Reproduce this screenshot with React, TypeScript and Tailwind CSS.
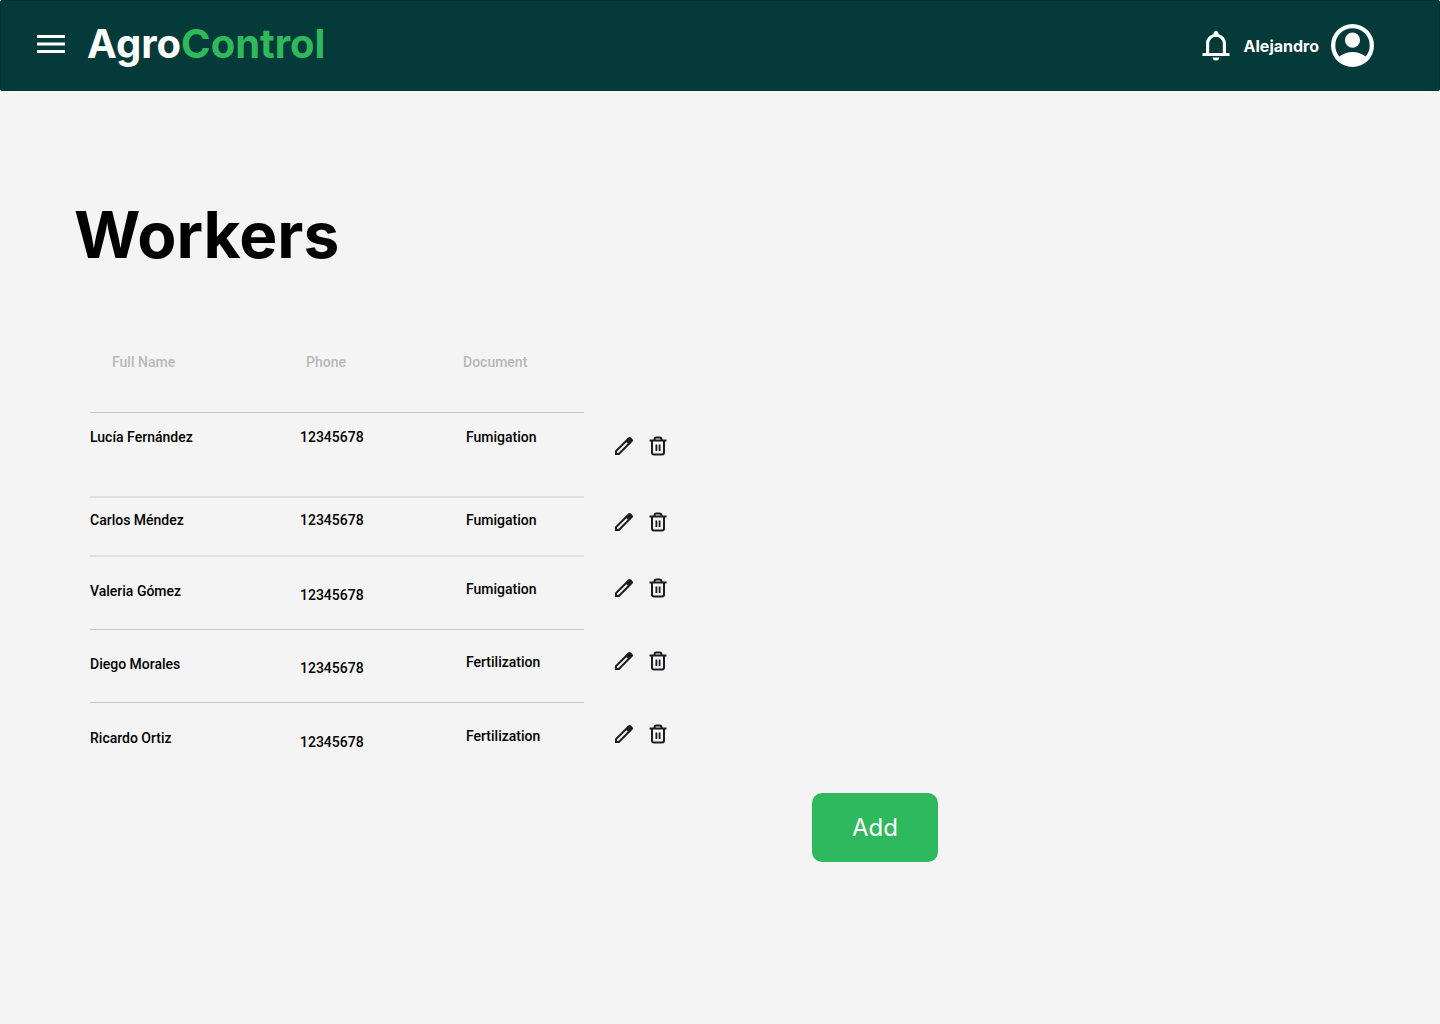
type Worker = {
  name: string;
  phone: string;
  task: string;
  layout: RowLayout;
};

type RowLayout = {
  row: string;
  name: string;
  phone: string;
  task: string;
  actions: string;
};

const tall: RowLayout = {
  row: 'h-[85px]',
  name: 'border-b-2 border-[#dedee4] align-top pt-3.5',
  phone: 'border-b-2 border-[#dedee4] align-top pt-3.5',
  task: 'border-b-2 border-[#dedee4] align-top pt-3.5',
  actions: 'pb-5',
};

const compact: RowLayout = {
  ...tall,
  row: 'h-[59px]',
  name: 'border-b-2 border-[#dedee4] align-top pt-3',
  phone: 'border-b-2 border-[#dedee4] align-top pt-3',
  task: 'border-b-2 border-[#dedee4] align-top pt-3',
  actions: 'pb-3',
};

const regular: RowLayout = {
  row: 'h-[73px]',
  name: 'border-b border-[#c4c5d4] align-middle pb-1',
  phone: 'border-b border-[#c4c5d4] align-middle pt-1',
  task: 'border-b border-[#c4c5d4] align-middle pb-2',
  actions: 'pb-3',
};

const workers: Worker[] = [
  { name: 'Lucía Fernández', phone: '12345678', task: 'Fumigation', layout: tall },
  { name: 'Carlos Méndez', phone: '12345678', task: 'Fumigation', layout: compact },
  { name: 'Valeria Gómez', phone: '12345678', task: 'Fumigation', layout: regular },
  { name: 'Diego Morales', phone: '12345678', task: 'Fertilization', layout: regular },
  { name: 'Ricardo Ortiz', phone: '12345678', task: 'Fertilization', layout: regular },
];

function MenuIcon() {
  return (
    <svg viewBox="0 0 28 20" className="h-5 w-7" fill="currentColor" aria-hidden="true">
      <path d="M0 1h28v3H0zM0 8.500h28v3H0zM0 16h28v3H0z" />
    </svg>
  );
}

function BellIcon() {
  return (
    <svg viewBox="0 0 28 30" className="h-[30px] w-7" fill="currentColor" aria-hidden="true">
      <path
        d="M.5 25v-3h3.500V12.500C4 8 7 4.500 11.500 3.300V2.300a2.500 2.300 0 0 1 5 0v1C21 4.500 24 8 24 12.500V22h3.500v3ZM7.200 22h13.600v-9.500a6.800 6.800 0 0 0-13.600 0Z"
        fillRule="evenodd"
      />
      <path d="M10.700 26.500h6.600a3.300 3 0 0 1-6.600 0Z" />
    </svg>
  );
}

function AccountIcon() {
  return (
    <svg viewBox="80 80 800 800" className="size-[43px]" fill="currentColor" aria-hidden="true">
      <path
        transform="translate(0 960)"
        d="M234-276q51-39 114-61.500T480-360q69 0 132 22.500T726-276q35-41 54.500-93T800-480q0-133-93.500-226.500T480-800q-133 0-226.500 93.500T160-480q0 59 19.500 111t54.500 93Zm246-164q-59 0-99.500-40.500T340-580q0-59 40.500-99.500T480-720q59 0 99.500 40.500T620-580q0 59-40.500 99.500T480-440Zm0 360q-83 0-156-31.500T197-197q-54-54-85.500-127T80-480q0-83 31.500-156T197-763q54-54 127-85.500T480-880q83 0 156 31.500T763-763q54 54 85.500 127T880-480q0 83-31.500 156T763-197q-54 54-127 85.500T480-80Z"
      />
    </svg>
  );
}

function PencilIcon() {
  return (
    <svg viewBox="0 0 24 24" className="size-6" fill="currentColor" aria-hidden="true">
      <path
        fillRule="evenodd"
        d="M3 21v-4.300L16.200 3.600a2 2 0 0 1 2.800 0L20.400 5a2 2 0 0 1 0 2.800L7.300 21H3Zm2-2h1.400l9.400-9.400-1.400-1.400L5 17.600V19Z"
      />
    </svg>
  );
}

function TrashIcon() {
  return (
    <svg viewBox="0 0 24 24" className="size-6" fill="none" stroke="currentColor" strokeWidth="2" aria-hidden="true">
      <path d="M3.500 6.500h17M8.500 6.500V5.500a2 2 0 0 1 2-2h3a2 2 0 0 1 2 2v1M6 6.500V18.500a2 2 0 0 0 2 2h8a2 2 0 0 0 2-2V6.500" />
      <path d="M10.400 10.500v6.500M13.600 10.500v6.500" strokeWidth="1.800" />
    </svg>
  );
}

export default function App() {
  return (
    <div className="min-h-screen bg-[#f4f4f4] font-['Inter',sans-serif] text-black">
      <header className="flex h-[91px] items-center justify-between rounded-xs border border-[#033232] bg-[#053a3a] pr-[65px] pl-9 text-white">
        <div className="flex items-center gap-[22px] pb-1">
          <button type="button" aria-label="Menu">
            <MenuIcon />
          </button>
          <a href="#" className="text-[40px] leading-12 font-bold">
            Agro<span className="text-[#2eb95d]">Control</span>
          </a>
        </div>
        <div className="flex items-center gap-3">
          <button type="button" aria-label="Notifications" className="mr-0.5">
            <BellIcon />
          </button>
          <a href="#" className="flex items-center gap-3 font-bold">
            Alejandro
            <AccountIcon />
          </a>
        </div>
      </header>

      <main className="px-[74px] pt-[104px]">
        <h1 className="text-[64px] leading-20 font-bold">Workers</h1>

        <div className="ml-4 pt-12 font-['Roboto',sans-serif] text-sm font-medium">
          <table className="border-separate border-spacing-0 text-left">
            <thead>
              <tr className="h-[90px] text-[#b8b8b8]">
                <th scope="col" className="w-[210px] border-b border-[#c4c5d4] pb-3 pl-[22px] align-middle font-medium">
                  Full Name
                </th>
                <th scope="col" className="w-[163px] border-b border-[#c4c5d4] pb-3 pl-1.5 align-middle font-medium">
                  Phone
                </th>
                <th scope="col" className="w-[121px] border-b border-[#c4c5d4] pb-3 align-middle font-medium">
                  Document
                </th>
                <td className="w-24" />
              </tr>
            </thead>
            <tbody className="[&>tr:last-child>td]:border-b-0">
              {workers.map((w) => (
                <tr key={w.name} className={w.layout.row}>
                  <td className={w.layout.name}>{w.name}</td>
                  <td className={w.layout.phone}>{w.phone}</td>
                  <td className={`pl-[3px] ${w.layout.task}`}>{w.task}</td>
                  <td className={`pl-7 align-middle ${w.layout.actions}`}>
                    <div className="flex gap-2.5 text-[#1d1b20]">
                      <button type="button" aria-label={`Edit ${w.name}`}>
                        <PencilIcon />
                      </button>
                      <button type="button" aria-label={`Delete ${w.name}`}>
                        <TrashIcon />
                      </button>
                    </div>
                  </td>
                </tr>
              ))}
            </tbody>
          </table>
        </div>

        <button
          type="button"
          className="mt-[17px] ml-[738px] rounded-[10px] bg-[#2eb95d] px-10 pt-[17px] pb-4 text-2xl leading-9 text-white"
        >
          Add
        </button>
      </main>
    </div>
  );
}
